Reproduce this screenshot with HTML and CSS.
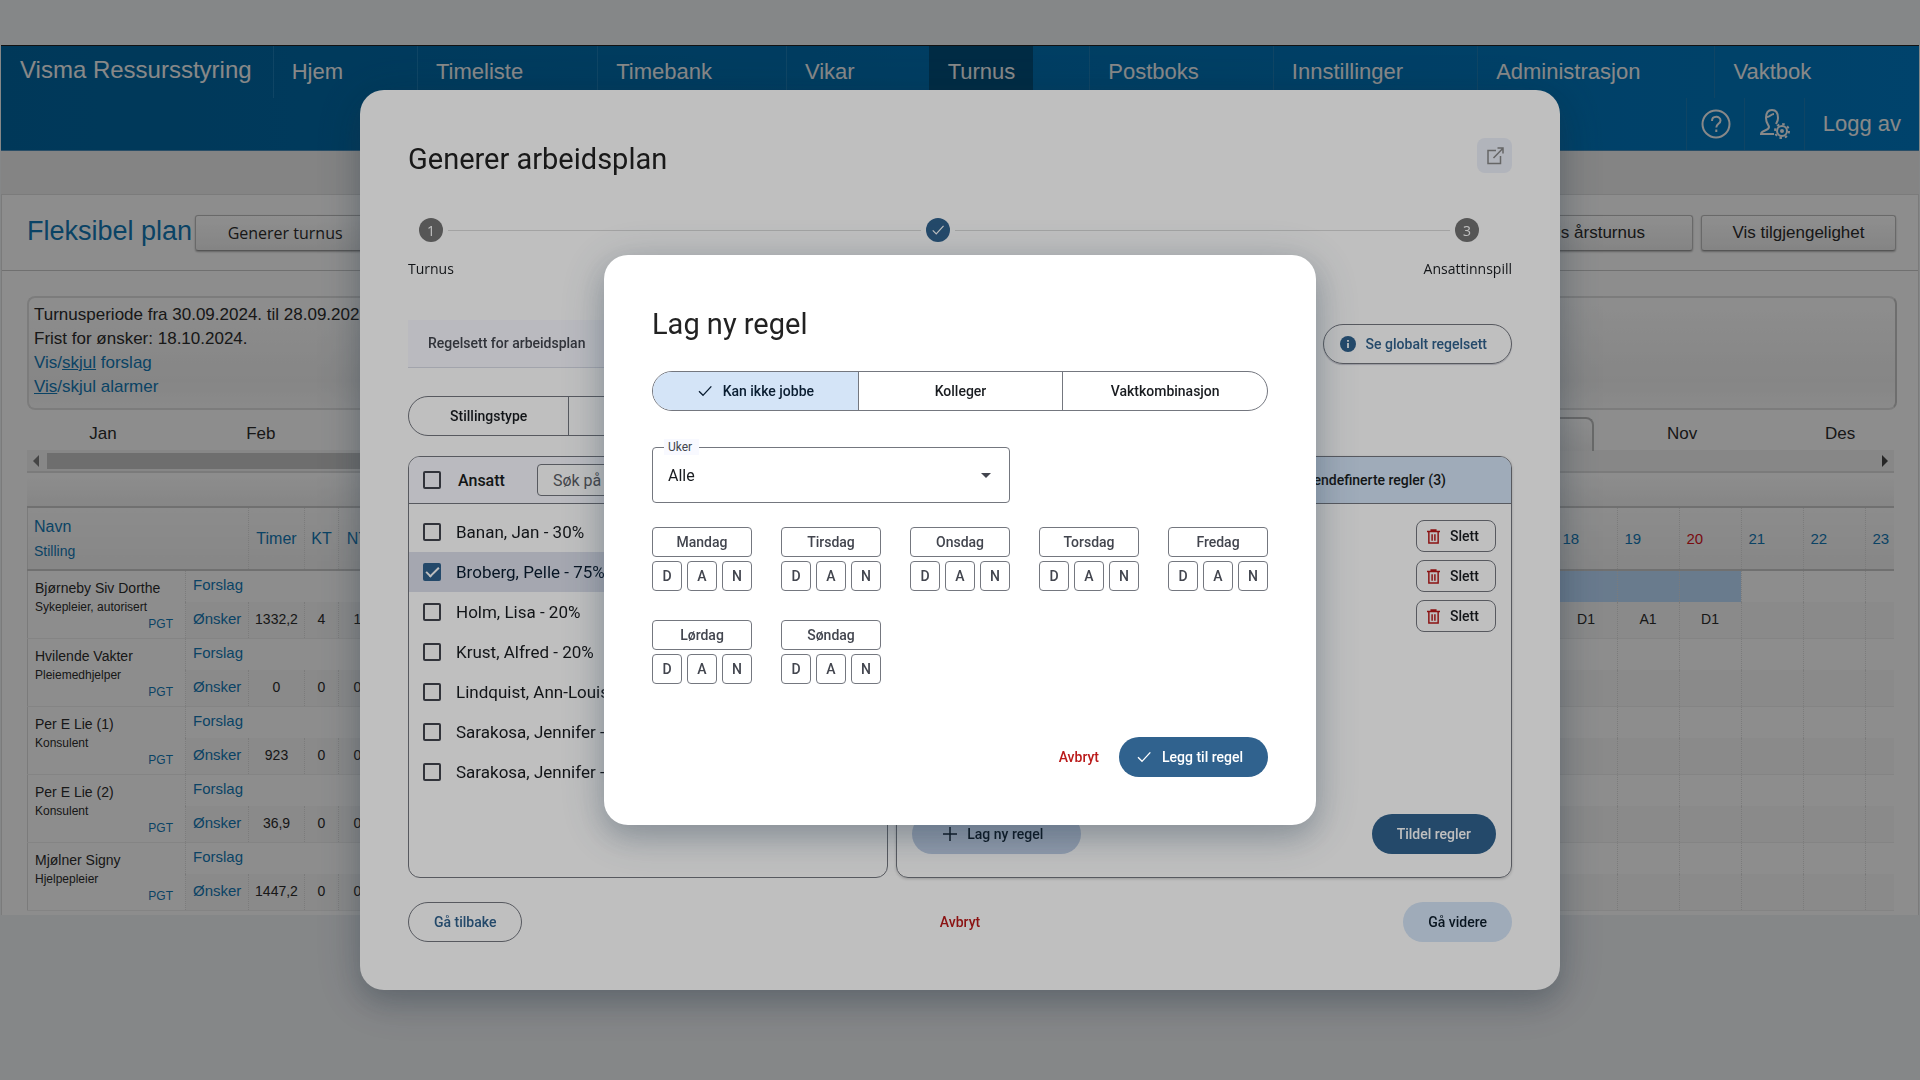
FILE: index.html
```html
<!DOCTYPE html>
<html lang="no">
<head>
<meta charset="utf-8">
<meta name="viewport" content="width=device-width, initial-scale=1">
<title>Visma Ressursstyring</title>
<link rel="stylesheet" href="styles.css">
</head>
<body>
<svg class="sprite" aria-hidden="true">
  <symbol id="check" viewBox="0 0 24 24"><path d="M3 12.500l6 6L21.500 5" fill="none" stroke="currentColor" stroke-width="2"/></symbol>
  <symbol id="trash" viewBox="0 0 14 16"><path d="M0 2.500h14M4.500 2.500V1h5v1.500M2 3v12h10V3M5.500 5.500v7M8.500 5.500v7" fill="none" stroke="currentColor" stroke-width="1.600"/></symbol>
</svg>

<div class="app">
  <header class="topbar">
    <nav class="nav">
      <a class="brand" href="#">Visma Ressursstyring</a>
      <a href="#">Hjem</a>
      <a href="#">Timeliste</a>
      <a href="#">Timebank</a>
      <a href="#">Vikar</a>
      <a class="current" href="#">Turnus</a>
      <a href="#">Postboks</a>
      <a href="#">Innstillinger</a>
      <a href="#">Administrasjon</a>
      <a href="#">Vaktbok</a>
    </nav>
    <div class="tools">
      <a href="#" aria-label="Hjelp"><svg width="30" height="30" viewBox="0 0 30 30" fill="none" stroke="currentColor" stroke-width="2"><circle cx="15" cy="15" r="13.500"/><path d="M11 12c0-5.500 8.500-5.500 8.500-.5 0 3.500-4.200 3.200-4.200 7M15.300 20.500v2.500"/></svg></a>
      <a href="#" aria-label="Bruker"><svg width="32" height="32" viewBox="0 0 32 32" fill="none" stroke="currentColor" stroke-width="2"><path d="M15 26H2c0-4 8-3 8-7 0-2-3-3-3-9 0-5 2-8 6-8s6 3 6 8c0 3-1 4-2 6M8 9c3 0 4-3 7-3"/><circle cx="23" cy="23" r="5"/><circle cx="23" cy="23" r="1"/><circle cx="23" cy="23" r="7" stroke-dasharray="2.500 3"/></svg></a>
      <a href="#">Logg av</a>
    </div>
  </header>

  <main class="plan">
    <div class="plan-head">
      <h1>Fleksibel plan</h1>
      <button class="tool-btn wide-text" type="button">Generer turnus</button>
      <span class="spacer"></span>
      <button class="tool-btn" type="button">Vis årsturnus</button>
      <button class="tool-btn" type="button">Vis tilgjengelighet</button>
    </div>
    <div class="plan-body">
      <div class="info">
        <p>Turnusperiode fra 30.09.2024. til 28.09.2025.</p>
        <p>Frist for ønsker: 18.10.2024.</p>
        <p><a href="#">Vis/<u>skjul</u> forslag</a></p>
        <p><a href="#"><u>Vis</u>/skjul alarmer</a></p>
      </div>
    </div>
    <div class="months">
      <span>Jan</span><span>Feb</span><span></span><span></span><span></span><span></span><span></span><span></span><span></span><span class="open"></span><span>Nov</span><span>Des</span>
    </div>
    <div class="plan-body">
      <div class="scroller">
        <svg width="6" height="12" viewBox="0 0 6 12"><path d="M6 0v12L0 6z" fill="#7d7d7d"/></svg>
        <span class="thumb"></span>
        <svg width="6" height="12" viewBox="0 0 6 12"><path d="M0 0v12l6-6z" fill="#444"/></svg>
      </div>
      <div class="band"></div>
      <table class="roster">
        <colgroup><col class="c-name"><col class="c-kind"><col class="c-hours"><col class="c-kt"><col class="c-nt"><col><col class="c-day"><col class="c-day"><col class="c-day"><col class="c-day"><col class="c-day"><col class="c-last"></colgroup>
        <thead>
          <tr><th class="who" colspan="2">Navn<small>Stilling</small></th><th>Timer</th><th>KT</th><th>NT</th><th></th><th class="day">18</th><th class="day">19</th><th class="day sun">20</th><th class="day">21</th><th class="day">22</th><th class="day">23</th></tr>
        </thead>
        <tbody>
          <tr><td class="who" rowspan="2">Bjørneby Siv Dorthe<small>Sykepleier, autorisert</small><a href="#">PGT</a></td><td class="kind"><a href="#">Forslag</a></td><td class="bare"></td><td class="bare"></td><td class="bare"></td><td class="blue"></td><td class="blue"></td><td class="blue"></td><td class="blue"></td><td></td><td></td><td></td></tr>
          <tr class="wish"><td class="kind"><a href="#">Ønsker</a></td><td>1332,2</td><td>4</td><td>1</td><td></td><td>D1</td><td>A1</td><td>D1</td><td></td><td></td><td></td></tr>
          <tr><td class="who" rowspan="2">Hvilende Vakter<small>Pleiemedhjelper</small><a href="#">PGT</a></td><td class="kind"><a href="#">Forslag</a></td><td class="bare"></td><td class="bare"></td><td class="bare"></td><td></td><td></td><td></td><td></td><td></td><td></td><td></td></tr>
          <tr class="wish"><td class="kind"><a href="#">Ønsker</a></td><td>0</td><td>0</td><td>0</td><td></td><td></td><td></td><td></td><td></td><td></td><td></td></tr>
          <tr><td class="who" rowspan="2">Per E Lie (1)<small>Konsulent</small><a href="#">PGT</a></td><td class="kind"><a href="#">Forslag</a></td><td class="bare"></td><td class="bare"></td><td class="bare"></td><td></td><td></td><td></td><td></td><td></td><td></td><td></td></tr>
          <tr class="wish"><td class="kind"><a href="#">Ønsker</a></td><td>923</td><td>0</td><td>0</td><td></td><td></td><td></td><td></td><td></td><td></td><td></td></tr>
          <tr><td class="who" rowspan="2">Per E Lie (2)<small>Konsulent</small><a href="#">PGT</a></td><td class="kind"><a href="#">Forslag</a></td><td class="bare"></td><td class="bare"></td><td class="bare"></td><td></td><td></td><td></td><td></td><td></td><td></td><td></td></tr>
          <tr class="wish"><td class="kind"><a href="#">Ønsker</a></td><td>36,9</td><td>0</td><td>0</td><td></td><td></td><td></td><td></td><td></td><td></td><td></td></tr>
          <tr><td class="who" rowspan="2">Mjølner Signy<small>Hjelpepleier</small><a href="#">PGT</a></td><td class="kind"><a href="#">Forslag</a></td><td class="bare"></td><td class="bare"></td><td class="bare"></td><td></td><td></td><td></td><td></td><td></td><td></td><td></td></tr>
          <tr class="wish"><td class="kind"><a href="#">Ønsker</a></td><td>1447,2</td><td>0</td><td>0</td><td></td><td></td><td></td><td></td><td></td><td></td><td></td></tr>
        </tbody>
      </table>
    </div>
  </main>
</div>

<div class="overlay">
  <section class="dialog" role="dialog" aria-labelledby="plan-title">
    <div class="dialog-head">
      <h2 id="plan-title">Generer arbeidsplan</h2>
      <button class="icon-btn" type="button" aria-label="Åpne i nytt vindu"><svg width="18" height="18" viewBox="0 0 18 18" fill="none" stroke="currentColor" stroke-width="1.500"><path d="M10 3.500H2V16.500h12.500V9M7.500 11L17 1.300M11.500 1h5.500v5.500"/></svg></button>
    </div>
    <div class="steps">
      <span class="dot">1</span><span class="rail"></span>
      <span class="dot done"><svg width="14" height="14"><use href="#check"/></svg></span><span class="rail second"></span>
      <span class="dot">3</span>
    </div>
    <div class="step-names"><span>Turnus</span><span>Ansattinnspill</span></div>

    <div class="ruleset">
      <div class="ruleset-name">Regelsett for arbeidsplan</div>
      <button class="btn outline raised" type="button"><svg width="16" height="16" viewBox="0 0 16 16"><circle cx="8" cy="8" r="8" fill="currentColor"/><path d="M8 7v5M8 4v1.800" stroke="#fff" stroke-width="1.800"/></svg>Se globalt regelsett</button>
    </div>

    <div class="segments narrow"><button type="button">Stillingstype</button><button type="button" aria-label="Ansatte"></button></div>

    <div class="panels">
      <section class="panel staff">
        <div class="panel-head">
          <label class="tick"><input type="checkbox"><b>Ansatt</b></label>
          <input class="search" type="text" placeholder="Søk på" aria-label="Søk på ansatt">
        </div>
        <div class="staff-list">
          <label class="tick"><input type="checkbox">Banan, Jan - 30%</label>
          <label class="tick on"><input type="checkbox" checked>Broberg, Pelle - 75%</label>
          <label class="tick"><input type="checkbox">Holm, Lisa - 20%</label>
          <label class="tick"><input type="checkbox">Krust, Alfred - 20%</label>
          <label class="tick"><input type="checkbox">Lindquist, Ann-Louise</label>
          <label class="tick"><input type="checkbox">Sarakosa, Jennifer -</label>
          <label class="tick"><input type="checkbox">Sarakosa, Jennifer -</label>
        </div>
      </section>
      <section class="panel rules">
        <div class="panel-head">Egendefinerte regler (3)</div>
        <div class="rule-list">
          <button class="delete" type="button"><svg width="13" height="15"><use href="#trash"/></svg>Slett</button>
          <button class="delete" type="button"><svg width="13" height="15"><use href="#trash"/></svg>Slett</button>
          <button class="delete" type="button"><svg width="13" height="15"><use href="#trash"/></svg>Slett</button>
        </div>
        <div class="rule-actions">
          <button class="btn soft new-rule" type="button"><svg width="14" height="14" viewBox="0 0 14 14"><path d="M7 0v14M0 7h14" stroke="currentColor" stroke-width="1.500"/></svg>Lag ny regel</button>
          <button class="btn solid" type="button">Tildel regler</button>
        </div>
      </section>
    </div>

    <footer class="dialog-foot">
      <div><button class="btn outline" type="button">Gå tilbake</button></div>
      <button class="btn text" type="button">Avbryt</button>
      <div class="end"><button class="btn soft" type="button">Gå videre</button></div>
    </footer>
  </section>
</div>

<div class="overlay">
  <section class="modal" role="dialog" aria-modal="true" aria-labelledby="rule-title">
    <h2 id="rule-title">Lag ny regel</h2>
    <div class="segments">
      <button class="on" type="button" aria-pressed="true"><svg width="16" height="16"><use href="#check"/></svg>Kan ikke jobbe</button>
      <button type="button" aria-pressed="false">Kolleger</button>
      <button type="button" aria-pressed="false">Vaktkombinasjon</button>
    </div>
    <div class="field">
      <label for="weeks">Uker</label>
      <select id="weeks"><option>Alle</option></select>
      <svg class="caret" width="10" height="5" viewBox="0 0 10 5"><path d="M0 0h10L5 5z" fill="#42454e"/></svg>
    </div>
    <div class="days">
      <div class="day-group"><button type="button">Mandag</button><button type="button">D</button><button type="button">A</button><button type="button">N</button></div>
      <div class="day-group"><button type="button">Tirsdag</button><button type="button">D</button><button type="button">A</button><button type="button">N</button></div>
      <div class="day-group"><button type="button">Onsdag</button><button type="button">D</button><button type="button">A</button><button type="button">N</button></div>
      <div class="day-group"><button type="button">Torsdag</button><button type="button">D</button><button type="button">A</button><button type="button">N</button></div>
      <div class="day-group"><button type="button">Fredag</button><button type="button">D</button><button type="button">A</button><button type="button">N</button></div>
      <div class="day-group"><button type="button">Lørdag</button><button type="button">D</button><button type="button">A</button><button type="button">N</button></div>
      <div class="day-group"><button type="button">Søndag</button><button type="button">D</button><button type="button">A</button><button type="button">N</button></div>
    </div>
    <div class="modal-foot">
      <button class="btn text" type="button">Avbryt</button>
      <button class="btn solid with-icon" type="button"><svg width="16" height="16"><use href="#check"/></svg>Legg til regel</button>
    </div>
  </section>
</div>
</body>
</html>
```
FILE: styles.css
```css
* { box-sizing: border-box; }
body { margin: 0; min-height: 100vh; background: #eef0f3; font-family: "Liberation Sans", Arial, sans-serif; color: #2b2b2b; }
h1, h2, p { margin: 0; font-weight: 400; }
button, input, select { font: inherit; color: inherit; margin: 0; }
a { color: #1378b4; text-decoration: none; }
.sprite { position: absolute; width: 0; height: 0; }
svg { flex: none; display: block; }

/* Roster application */
.app { padding-top: 45px; }
.topbar { margin: 0 1px; height: 106px; border-top: 1px solid #222; border-bottom: 1px solid #4b8cb8; background: linear-gradient(90deg, #00659f, #0078c0); }
.topbar a { color: #f3f3f3; font-size: 22px; line-height: 52px; border-left: 1px solid #1b7cb5; padding: 0 74px 0 18px; white-space: nowrap; }
.nav { display: flex; height: 52px; }
.nav .brand { font-size: 24px; line-height: 48px; border: 0; padding: 0 21px 0 19px; }
.nav .current { background: #004e7a; border-color: #004e7a; padding-right: 18px; margin-right: 56px; }
.tools { display: flex; justify-content: flex-end; height: 52px; }
.tools a { display: flex; align-items: center; padding: 0 13px 0 14px; }
.tools a:last-child { padding: 0 18px; }
.plan { margin: 43px 1px 0; padding-bottom: 4px; border: 1px solid #dcdcdc; border-bottom: 0; background: #fdfdfd; box-shadow: 0 -43px 0 #ebebeb; }
.plan-head { display: flex; align-items: center; gap: 8px; height: 76px; padding: 0 22px 0 25px; border-bottom: 1px solid #c8c8c8; }
.plan-head h1 { font-size: 27px; line-height: 32px; padding-bottom: 4px; color: #1378b4; margin-right: -5px; }
.spacer { flex: 1; }
.tool-btn { width: 195px; height: 36px; font-size: 17px; border: 1px solid #bbb; border-bottom-color: #999; border-radius: 3px; background: linear-gradient(#fff, #ececec); box-shadow: 0 1px 2px rgba(0, 0, 0, .3); }
.wide-text { font-family: "Open Sans", sans-serif; font-size: 16px; width: 180px; }
.plan-body { padding: 0 24px 0 25px; }
.info { margin: 25px -3px 0 0; height: 114px; padding: 5px; border: 2px solid #dedede; border-right-color: #c4c4c4; border-radius: 8px; background: linear-gradient(#fdfdfd, #efefef 75%, #f7f7f7); font-size: 17px; line-height: 24px; }
.months { display: grid; grid-template-columns: repeat(12, 1fr); margin-right: -1px; padding: 7px 0 0 22px; height: 40px; font-size: 17px; line-height: 34px; text-align: center; }
.months .open { margin-right: 9px; border: 2px solid #bbb; border-bottom: 0; border-radius: 8px 8px 0 0; background: linear-gradient(#fff, #efefef); }
.scroller { display: flex; align-items: center; gap: 8px; height: 21px; padding: 0 6px; background: #f2f2f2; }
.thumb { width: 1400px; height: 16px; background: #c4c4c4; }
.scroller svg:last-child { margin-left: auto; }
.band { height: 37px; border-top: 2px solid #dcdcdc; border-bottom: 2px solid #c8c8c8; background: linear-gradient(#fdfdfd, #efefef); }
.roster { width: 100%; table-layout: fixed; border-collapse: collapse; font-size: 14px; border-left: 1px solid #ddd; }
.c-name { width: 158px; } .c-kind { width: 63px; } .c-hours { width: 56px; } .c-kt { width: 34px; } .c-nt { width: 38px; } .c-day { width: 62px; } .c-last { width: 29px; }
.roster th { height: 62px; padding: 0; font-size: 16px; font-weight: 400; color: #1378b4; border-bottom: 2px solid #c8c8c8; border-left: 1px dotted #ddd; background: linear-gradient(#fafafa, #f0f0f0); }
.roster th.who { text-align: left; padding-left: 6px; line-height: 24px; }
.roster th small { display: block; font-size: 14px; }
.roster th.day { text-align: left; padding-left: 7px; font-size: 15px; }
.roster th.sun { color: #d8141c; }
.roster td { height: 32px; padding: 0; text-align: center; border-left: 1px dotted #ddd; }
.roster .wish td { height: 36px; padding-bottom: 2px; background: #f6f6f6; border-bottom: 1px solid #ececec; }
.roster td.bare { border-left: 0; }
.roster td.blue { background: #bcdbfd; }
.roster td.who { text-align: left; vertical-align: top; padding: 7px 12px 0 7px; line-height: 20px; border-bottom: 1px solid #ececec; border-left: 0; }
.roster td small { display: block; font-size: 12px; line-height: 18px; }
.roster td.who a { display: block; font-size: 12px; line-height: 16px; text-align: right; }
.roster td.kind { text-align: left; padding: 0 0 4px 7px; font-size: 15px; }
.roster .wish td.kind { padding-bottom: 2px; }

/* Dialogs */
.overlay { position: fixed; inset: 0; display: flex; align-items: center; justify-content: center; background: rgba(0, 0, 0, .25); font-family: Roboto, sans-serif; font-size: 14px; color: #191c20; }
.overlay button { cursor: pointer; }
h2 { font-size: 29px; line-height: 42px; color: #222; }
.dialog, .modal { background: #fff; border-radius: 24px; padding: 48px; box-shadow: 0 12px 24px rgba(40, 62, 82, .2), 0 8px 48px rgba(40, 62, 82, .25); }
.dialog { width: 1200px; }
.modal { width: 712px; }
.dialog-head { display: flex; justify-content: space-between; align-items: flex-start; height: 80px; }
.icon-btn { display: grid; place-items: center; width: 35px; height: 35px; padding: 0; border: 0; border-radius: 8px; background: #edf0fa; color: #888; }
.steps { display: flex; align-items: center; gap: 5px; padding: 0 33px 0 11px; height: 24px; }
.dot { display: grid; place-items: center; width: 24px; height: 24px; border-radius: 50%; background: #737373; color: #fff; font-family: "Open Sans", sans-serif; font-size: 14px; }
.dot.done { background: #30628e; }
.rail { flex: 22; height: 1px; background: #dadada; }
.rail.second { flex: 23; }
.step-names { display: flex; justify-content: space-between; margin-top: 16px; font-family: "Open Sans", sans-serif; font-size: 14px; line-height: 22px; }
.ruleset { display: flex; justify-content: space-between; align-items: center; height: 48px; margin-top: 40px; font-weight: 500; }
.ruleset-name { width: 800px; padding: 0 20px; line-height: 47px; color: #42454e; background: #f8f9ff; border-bottom: 1px solid #d8dbe6; }
.btn { display: inline-flex; align-items: center; justify-content: center; gap: 10px; height: 40px; padding: 0 25px; border: 0; border-radius: 20px; background: none; font-size: 14px; font-weight: 500; white-space: nowrap; }
.outline { border: 1px solid #74777f; color: #30628e; }
.raised { padding: 0 24px 0 16px; box-shadow: 0 1px 1px rgba(80, 80, 110, .3); }
.solid { background: #30628e; color: #fff; }
.soft { background: #d4e4f7; color: #0d1d2b; }
.text { color: #ba1a1a; padding: 0; }
.segments { display: grid; grid-template-columns: repeat(3, 1fr); height: 40px; border: 1px solid #74777f; border-radius: 20px; overflow: hidden; }
.segments button { display: flex; align-items: center; justify-content: center; gap: 10px; padding: 0; border: 0; background: none; font-weight: 500; }
.segments button + button { border-left: 1px solid #74777f; }
.segments .on { background: #d4e4f7; color: #0a1d31; }
.segments.narrow { width: 480px; margin-top: 28px; }
.panels { display: flex; gap: 8px; margin-top: 20px; min-height: 422px; }
.panel { display: flex; flex-direction: column; border: 1px solid #74777f; border-radius: 12px; overflow: hidden; }
.staff { flex: 480; }
.rules { flex: 616; box-shadow: 0 1px 3px rgba(0, 0, 0, .2); }
.panel-head { display: flex; align-items: center; height: 47px; padding: 0 14px 0 0; border-bottom: 1px solid #74777f; background: #f8f9ff; }
.rules .panel-head { justify-content: flex-end; padding-right: 65px; background: #d4e4f7; font-weight: 500; }
.tick { display: flex; align-items: center; gap: 15px; height: 40px; padding-left: 14px; font-size: 17px; }
.tick b { font-size: 16px; font-weight: 500; padding-left: 2px; }
.tick input { appearance: none; display: grid; place-items: center; flex: none; width: 18px; height: 18px; border: 2px solid #42454e; border-radius: 2px; }
.tick input:checked { background: #30628e; border-color: #30628e; }
.tick input:checked::after { content: ""; width: 11px; height: 5px; border: solid #fff; border-width: 0 0 2px 2px; transform: translateY(-2px) rotate(-45deg); }
.tick.on { background: #dcdfeb; color: #0a1d31; }
.search { margin-left: 32px; width: 300px; height: 32px; padding: 0 15px; border: 1px solid #74777f; border-radius: 4px; background: #fff; font-size: 16px; }
.search::placeholder { color: #5b5e66; opacity: 1; }
.staff-list { padding: 8px 0; }
.rule-list { display: flex; flex-direction: column; align-items: flex-end; gap: 8px; padding: 16px 15px 0; }
.delete { display: flex; align-items: center; gap: 10px; width: 80px; height: 32px; padding: 0 10px; border: 1px solid #74777f; border-radius: 8px; background: none; font-weight: 500; }
.delete svg { color: #ba1a1a; }
.rule-actions { display: flex; justify-content: space-between; margin-top: auto; padding: 0 15px 23px; }
.new-rule { padding: 0 38px 0 31px; background: #c0cfe6; }
.dialog-foot { display: grid; grid-template-columns: 1fr auto 1fr; margin-top: 24px; }
.end { text-align: right; }

.modal h2 { margin-bottom: 26px; }
.field { position: relative; width: 358px; margin-top: 36px; }
.field label { position: absolute; left: 12px; top: -8px; padding: 0 4px; width: 35px; line-height: 16px; font-size: 12px; color: #42454e; background: #f8f9ff; }
.field select { appearance: none; display: block; width: 100%; height: 56px; padding: 0 15px; border: 1px solid #74777f; border-radius: 4px; background: #fff; font-size: 16px; }
.caret { position: absolute; right: 19px; top: 26px; pointer-events: none; }
.days { display: grid; grid-template-columns: repeat(5, 1fr); gap: 29px; margin-top: 24px; }
.day-group { display: grid; grid-template-columns: repeat(3, 1fr); gap: 4px 5px; }
.day-group button { height: 30px; padding: 0; border: 1px solid #74777f; border-radius: 4px; background: #fff; color: #42454e; font-size: 14px; font-weight: 500; }
.day-group button:first-child { grid-column: 1 / -1; }
.modal-foot { display: flex; justify-content: flex-end; gap: 20px; margin-top: 53px; }
.with-icon { padding: 0 25px 0 17px; }
```
